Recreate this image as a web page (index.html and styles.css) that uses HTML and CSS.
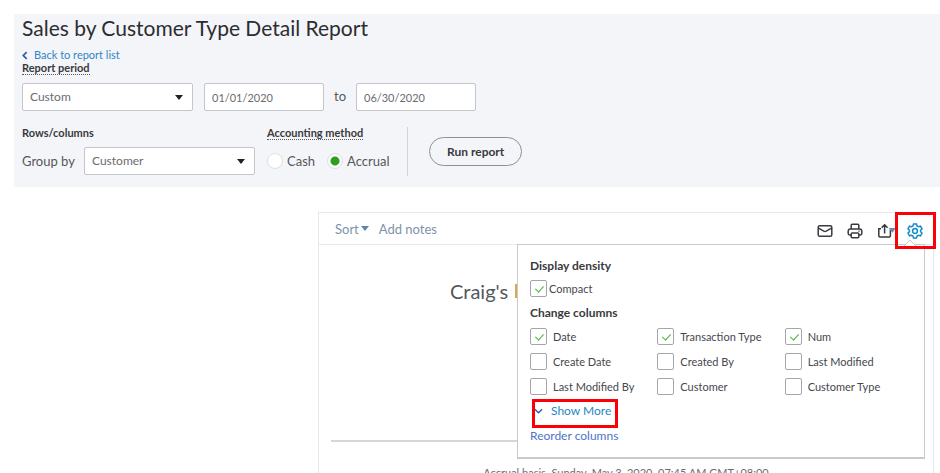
FILE: index.html
```html
<!DOCTYPE html>
<html lang="en">
<head>
<meta charset="utf-8">
<meta name="viewport" content="width=device-width, initial-scale=1">
<title>Sales by Customer Type Detail Report</title>
<link rel="stylesheet" href="styles.css">
</head>
<body>
<header class="filters">
  <h1 class="page-title">Sales by Customer Type Detail Report</h1>
  <a class="back" href="#"><svg class="back-icon" viewBox="0 0 7 10"><path d="M5.5 1 1.5 5l4 4"/></svg>Back to report list</a>
  <div><label class="caption dotted" for="period">Report period</label></div>
  <div class="period-row">
    <span class="select"><select id="period"><option>Custom</option></select></span>
    <input class="date" type="text" value="01/01/2020" aria-label="From">
    <span class="to">to</span>
    <input class="date" type="text" value="06/30/2020" aria-label="To">
  </div>
  <div class="options-row">
    <section class="rows-group">
      <h2 class="caption">Rows/columns</h2>
      <div class="group-by">
        <label for="group">Group by</label>
        <span class="select"><select id="group"><option>Customer</option></select></span>
      </div>
    </section>
    <section class="method">
      <h2 class="caption dotted">Accounting method</h2>
      <div class="radios">
        <label class="radio"><input type="radio" name="method">Cash</label>
        <label class="radio"><input type="radio" name="method" checked>Accrual</label>
      </div>
    </section>
    <div class="run-area"><button class="run" type="button">Run report</button></div>
  </div>
</header>

<main class="report">
  <div class="toolbar">
    <button class="tool sort" type="button">Sort<svg class="caret" viewBox="0 0 8 5"><path d="M0 0h8L4 5z"/></svg></button>
    <button class="tool" type="button">Add notes</button>
    <div class="actions">
      <button class="icon" type="button" aria-label="Email"><svg viewBox="0 0 16 16"><rect x="1.2" y="2.7" width="13.6" height="10.6" rx="1.6"/><path d="m1.5 5.2 5.3 3q1.2.6 2.4 0l5.3-3"/></svg></button>
      <button class="icon" type="button" aria-label="Print"><svg viewBox="0 0 16 16"><path d="M4.2 6V2.2q0-1 1-1h5.6q1 0 1 1V6M4 12H2.6Q1.2 12 1.2 10.600V8.200Q1.200 6 3.400 6h9.200q2.200 0 2.200 2.200v2.400q0 1.400-1.400 1.400H12"/><rect x="4.200" y="10" width="7.600" height="4.800" rx="1"/><path d="M11.500 8.200h1"/></svg></button>
      <button class="icon" type="button" aria-label="Export"><svg viewBox="0 0 16 16"><path d="M4 5.800H1.800v7q0 1.200 1.200 1.200h9.200q1.200 0 1.200-1.200V7M7.600 10.500V2M4.600 4.800l3-3 3 3"/><path class="fill" d="M11.500 5h7.500l-3.700 4.800z"/></svg></button>
      <button class="icon active" type="button" aria-label="Settings"><svg viewBox="0 0 16 16"><path d="M6.500 1h3l.5 2 1.500.8 2-.600 1.500 2.600L13.600 7.200v1.600l1.400 1.400-1.500 2.600-2-.600-1.500.800-.500 2h-3L6 13l-1.500-.800-2 .600L1 10.200l1.400-1.400V7.200L1 5.800l1.500-2.600 2 .600L6 3z"/><circle cx="8" cy="8" r="2.400"/></svg></button>
    </div>
    <span class="marker marker-gear"></span>
  </div>
  <div class="sheet">
    <h2 class="company">Craig's <span class="company-edge"></span></h2>
    <hr class="rule">
    <p class="basis">Accrual basis&nbsp; Sunday, May 3, 2020&nbsp; 07:45 AM GMT+08:00</p>
    <section class="panel">
      <svg class="notch" viewBox="0 0 14 8"><path d="M1 8l6-6 6 6"/></svg>
      <h3 class="panel-title">Display density</h3>
      <label class="check compact"><input type="checkbox" checked>Compact</label>
      <h3 class="panel-title">Change columns</h3>
      <div class="columns">
        <label class="check"><input type="checkbox" checked>Date</label>
        <label class="check"><input type="checkbox" checked>Transaction Type</label>
        <label class="check"><input type="checkbox" checked>Num</label>
        <label class="check"><input type="checkbox">Create Date</label>
        <label class="check"><input type="checkbox">Created By</label>
        <label class="check"><input type="checkbox">Last Modified</label>
        <label class="check"><input type="checkbox">Last Modified By</label>
        <label class="check"><input type="checkbox">Customer</label>
        <label class="check"><input type="checkbox">Customer Type</label>
      </div>
      <div class="more-row">
        <button class="more" type="button"><svg class="more-icon" viewBox="0 0 10 6"><path d="M1 1l4 4 4-4"/></svg>Show More</button>
        <span class="marker marker-more"></span>
      </div>
      <a class="reorder" href="#">Reorder columns</a>
    </section>
  </div>
</main>
</body>
</html>
```

FILE: styles.css
```css
* { box-sizing: border-box; }

body {
  display: flex;
  flex-direction: column;
  height: 100vh;
  margin: 0;
  padding: 14px 0 0 14px;
  overflow: hidden;
  background: #fff;
  color: #55575d;
  font: 12px/16px Lato, "Liberation Sans", sans-serif;
}

h1, h2, h3, p { margin: 0; }
button, input, select { font: inherit; color: inherit; }
a { text-decoration: none; }
svg { fill: none; stroke: currentColor; overflow: visible; }

.filters {
  flex: none;
  padding: 0 8px 11px;
  background: #f4f5f8;
}

.page-title {
  font-size: 21px;
  font-weight: 400;
  line-height: 28px;
  color: #2b2d33;
}

.back {
  display: flex;
  align-items: center;
  gap: 6px;
  margin-top: 6px;
  font-size: 11px;
  line-height: 14px;
  color: #2f86c6;
}

.back-icon { width: 6px; height: 9px; stroke: #3457b5; stroke-width: 2; }

.caption {
  display: inline-block;
  font-size: 11px;
  font-weight: 700;
  line-height: 12px;
  color: #393a3d;
}

.filters > div > label.caption { display: block; width: fit-content; }
.dotted { border-bottom: 1px dotted #55575d; }

.period-row { display: flex; align-items: center; margin-top: 8px; }

.select { position: relative; display: block; width: 171px; }

.select::after {
  content: "";
  position: absolute;
  top: 12px;
  right: 10px;
  border: 4px solid transparent;
  border-top: 5px solid #222;
  border-bottom: 0;
  pointer-events: none;
}

select, .date {
  display: block;
  width: 100%;
  height: 28px;
  margin: 0;
  padding: 0 7px;
  border: 1px solid #c3c6cc;
  border-radius: 2px;
  background: #fff;
  color: #6b6c72;
  appearance: none;
}

.date { width: 120px; font-size: 11px; }
.period-row .select { margin-right: 11px; }
.to { width: 32px; padding-bottom: 3px; text-align: center; font-size: 13px; }

.options-row { display: flex; margin-top: 16px; }
.rows-group { margin-right: 12px; }
.rows-group .caption, .method .caption { display: block; width: fit-content; }
.group-by { display: flex; align-items: center; justify-content: space-between; width: 233px; margin-top: 8px; font-size: 13px; }
.group-by select { font-size: 12px; }

.method { width: 140px; }
.radios { display: flex; gap: 12px; margin-top: 13px; }
.radio { display: flex; align-items: center; gap: 4px; font-size: 13px; }

.radio input {
  width: 16px;
  height: 16px;
  margin: 0;
  border: 1px solid #dcdfe4;
  border-radius: 50%;
  background: #fff;
  appearance: none;
}

.radio input:checked { background: radial-gradient(circle, #2ca01c 4px, #fff 5px); }

.run-area { padding: 10px 21px; border-left: 1px solid #d0d3d8; }

.run {
  display: block;
  height: 29px;
  padding: 0 17px;
  border: 1px solid #8d9096;
  border-radius: 15px;
  background: transparent;
  color: #393a3d;
  font-weight: 700;
}

.report {
  flex: 1;
  display: flex;
  flex-direction: column;
  min-height: 0;
  margin: 25px 6px 0 304px;
  border: 1px solid #e3e9f1;
  border-bottom: 0;
}

.toolbar {
  position: relative;
  flex: none;
  display: flex;
  align-items: center;
  gap: 10px;
  height: 32px;
  padding: 0 10px 0 16px;
  border-bottom: 1px solid #e3e9f1;
}

.tool {
  padding: 0;
  border: 0;
  background: none;
  font-size: 13px;
  color: #7d93ab;
}

.sort { display: flex; align-items: center; gap: 2px; }
.caret { width: 8px; height: 5px; fill: #5b87ad; stroke: none; }

.actions { display: flex; gap: 14px; margin-left: auto; padding-top: 4px; }
.icon { padding: 0; border: 0; background: none; color: #393a3d; }
.icon svg { display: block; width: 16px; height: 16px; stroke-width: 1.500; }
.icon .fill { fill: #6a8cae; stroke: none; }
.icon.active { color: #128bcb; }

.marker { position: absolute; border: 3px solid #fb0007; pointer-events: none; z-index: 2; }
.marker-gear { top: -1px; right: -3px; width: 41px; height: 37px; }

.sheet { position: relative; padding: 34px 12px 0; }

.company {
  display: flex;
  align-items: center;
  gap: 7px;
  padding-left: 119px;
  font-size: 20px;
  font-weight: 400;
  line-height: 24px;
}

.company-edge { width: 2px; height: 14px; background: #dca54e; }

.rule { height: 2px; margin: 137px 0 0; border: 0; background: #d6d6d6; }
.basis { margin-top: 23px; text-align: center; font-size: 11px; color: #6b6c72; }

.panel {
  position: absolute;
  top: -1px;
  right: 8px;
  width: 408px;
  padding: 13px 12px;
  border: 1px solid #c9cacd;
  border-bottom-width: 2px;
  background: #fff;
  color: #45474d;
}

.notch { position: absolute; top: -7px; right: 7px; width: 14px; height: 8px; fill: #fff; stroke: #c9cacd; }

.panel-title { font-size: 12px; font-weight: 700; line-height: 16px; color: #393a3d; }

.check { display: flex; align-items: center; gap: 6px; font-size: 11px; line-height: 17px; }
.compact { gap: 2px; margin: 6px 0 8px; }

.check input {
  position: relative;
  width: 17px;
  height: 17px;
  margin: 0;
  border: 1px solid #a4a6ac;
  border-radius: 2px;
  background: #fff;
  appearance: none;
}

.check input:checked::after {
  content: "";
  position: absolute;
  top: 3px;
  left: 6px;
  width: 4px;
  height: 7px;
  border: solid #4bb53c;
  border-width: 0 1px 1px 0;
  transform: rotate(42deg);
}

.columns { display: grid; grid-template-columns: repeat(3, 1fr); gap: 8px 0; margin-top: 7px; }

.more-row { position: relative; margin: 8px 0 9px; }

.more {
  display: flex;
  align-items: center;
  gap: 8px;
  padding: 0 0 0 4px;
  border: 0;
  background: none;
  color: #1f86c9;
}

.more-icon { width: 9px; height: 6px; stroke: #3457b5; stroke-width: 1.500; }
.marker-more { top: -4px; left: 2px; width: 86px; height: 29px; }
.reorder { display: block; color: #4f74c9; }
```
